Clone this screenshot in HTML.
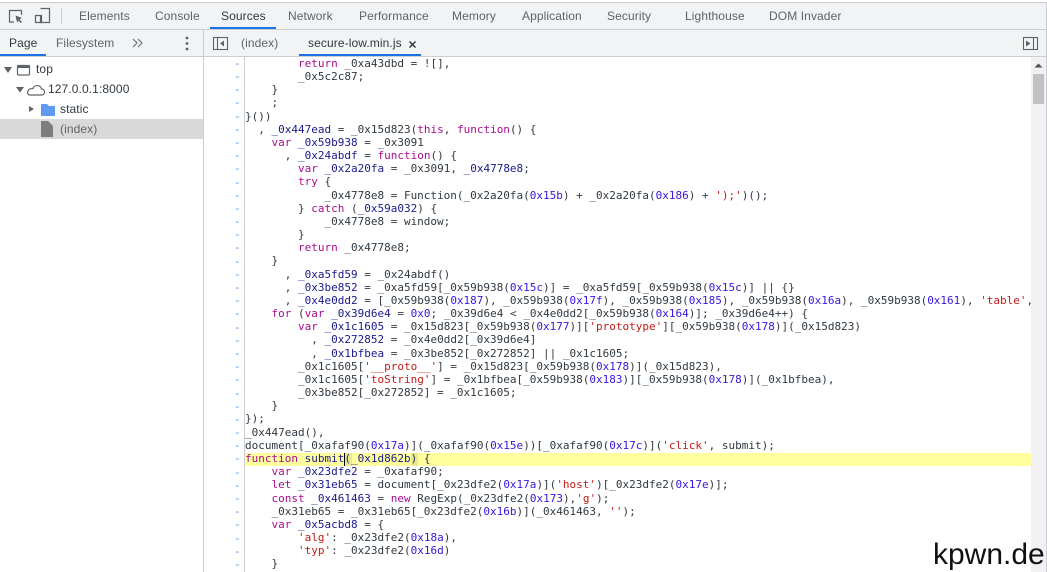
<!DOCTYPE html>
<html><head><meta charset="utf-8"><style>
html,body{margin:0;padding:0;background:#fff}
#r{position:relative;width:1047px;height:572px;overflow:hidden;background:#fff;font-family:"Liberation Sans",sans-serif;font-size:12px;letter-spacing:.1px;color:#5f6368}
.a{position:absolute;white-space:nowrap;line-height:16px}
.box{position:absolute}
#code{position:absolute;left:245px;top:56.85px;width:786px;height:516px;overflow:hidden;font:11px/13.18px "DejaVu Sans Mono",monospace;letter-spacing:0;color:#303942;white-space:pre}
#code div{height:13.18px}
#gut{position:absolute;left:234px;top:56.85px;width:10px;font:11px/13.18px "DejaVu Sans Mono",monospace;letter-spacing:0;color:#4a8fe8;white-space:pre}
#code a{color:#aa0d91}#code b{font-weight:400;color:#1a1a8c}#code i{font-style:normal;color:#3a14e0}#code u{text-decoration:none;color:#c41a16}
</style></head><body><div id="r">
<div class="box" style="left:0;top:2px;width:1047px;height:1px;background:#cbcdd1"></div>
<div class="box" style="left:0;top:3px;width:1047px;height:26px;background:#f1f3f4"></div>
<div class="box" style="left:0;top:29px;width:1047px;height:1px;background:#cbcdd1"></div>
<div class="box" style="left:0;top:30px;width:1047px;height:26px;background:#f1f3f4"></div>
<div class="box" style="left:0;top:56px;width:1047px;height:1px;background:#cbcdd1"></div>
<div class="box" style="left:203px;top:30px;width:1px;height:542px;background:#cbcdd1"></div>
<div class="box" style="left:1046px;top:3px;width:1px;height:569px;background:#cbcdd1"></div>
<svg class="box" style="left:0;top:0" width="70" height="30" fill="none" stroke="#5f6368" stroke-width="1.2">
<path d="M14 22H9.5V10.5H21.5V15"/><path d="M15.5 15.5L22 18L19.5 19.5L22 22L20.5 23L18.5 20.5L17 22.5Z" fill="#5f6368" stroke="none"/>
<path d="M40.5 8.5H49.5V22.5H40.5V16"/><path d="M35.5 15.5H41.5V22.5H35.5Z"/>
</svg>
<div class="box" style="left:61px;top:8px;width:1px;height:16px;background:#cbcdd1"></div>
<span class="a" style="left:79px;top:8px">Elements</span>
<span class="a" style="left:155px;top:8px">Console</span>
<span class="a" style="left:221px;top:8px;color:#303942">Sources</span>
<span class="a" style="left:288px;top:8px">Network</span>
<span class="a" style="left:359px;top:8px">Performance</span>
<span class="a" style="left:452px;top:8px">Memory</span>
<span class="a" style="left:522px;top:8px">Application</span>
<span class="a" style="left:607px;top:8px">Security</span>
<span class="a" style="left:685px;top:8px">Lighthouse</span>
<span class="a" style="left:769px;top:8px">DOM Invader</span>
<div class="box" style="left:210px;top:27px;width:66px;height:2px;background:#1a73e8"></div>
<span class="a" style="left:9px;top:35px;color:#303942">Page</span>
<span class="a" style="left:56px;top:35px">Filesystem</span>
<div class="box" style="left:0;top:54px;width:46px;height:2px;background:#1a73e8"></div>
<svg class="box" style="left:130px;top:34px" width="70" height="18" fill="none" stroke="#6e7276" stroke-width="1.2">
<path d="M3 5L7 9L3 13M8 5L12 9L8 13"/>
<circle cx="57" cy="4" r="1.4" fill="#5f6368" stroke="none"/><circle cx="57" cy="9.5" r="1.4" fill="#5f6368" stroke="none"/><circle cx="57" cy="15" r="1.4" fill="#5f6368" stroke="none"/>
</svg>
<svg class="box" style="left:212px;top:35px" width="18" height="18" fill="none" stroke="#5f6368" stroke-width="1.1">
<rect x="1.5" y="2.5" width="14" height="12"/><path d="M5.5 2.5V14.5"/><path d="M12 5.5V11.5L8 8.5Z" fill="#5f6368" stroke="none"/>
</svg>
<span class="a" style="left:241px;top:35px">(index)</span>
<span class="a" style="left:308px;top:35px;color:#303942">secure-low.min.js</span>
<svg class="box" style="left:408px;top:40px" width="10" height="10" stroke="#303942" stroke-width="1.5"><path d="M1.5 1.5L7.5 7.5M7.5 1.5L1.5 7.5"/></svg>
<div class="box" style="left:299px;top:54px;width:122px;height:2px;background:#1a73e8"></div>
<svg class="box" style="left:1022px;top:34px" width="18" height="18" fill="none" stroke="#5f6368" stroke-width="1.1">
<rect x="1.5" y="3.5" width="14" height="12"/><path d="M11.5 3.5V15.5"/><path d="M4 6.5V12.5L8.5 9.5Z" fill="#5f6368" stroke="none"/>
</svg>
<div class="box" style="left:0;top:119px;width:203px;height:20px;background:#d9d9d9"></div>
<svg class="box" style="left:0;top:57px" width="70" height="84" fill="none" stroke="#5f6368" stroke-width="1.2">
<path d="M4 10H12L8 16Z" fill="#5f6368" stroke="none"/>
<rect x="17.5" y="8.5" width="12" height="9.5" rx="1"/><path d="M17.5 10H29.5" stroke-width="2"/>
<path d="M16 30H24L20 35.5Z" fill="#5f6368" stroke="none"/>
<path d="M30 38H41.5C45.5 38 45.5 32 41.5 32C40.5 27.5 34 27.5 33 31.5C27 31 26 38 30 38Z"/>
<path d="M29 49L34 52L29 55Z" fill="#5f6368" stroke="none"/>
<path d="M41 47H47L49 49H55V59H41Z" fill="#5e9bf0" stroke="none"/>
<path d="M41 64H48L53 69V80H41Z" fill="#7d7d7d" stroke="none"/>
</svg>
<span class="a" style="left:36px;top:61px;color:#303942">top</span>
<span class="a" style="left:48px;top:81px;color:#303942">127.0.0.1:8000</span>
<span class="a" style="left:60px;top:101px;color:#303942">static</span>
<span class="a" style="left:60px;top:121px">(index)</span>
<div class="box" style="left:244px;top:57px;width:1px;height:515px;background:#cbcdd1"></div>
<div class="box" style="left:245px;top:453px;width:786px;height:13px;background:#ffff9e"></div>
<div class="box" style="left:345px;top:453px;width:7px;height:13px;background:#e8e89a"></div>
<div class="box" style="left:411px;top:453px;width:7px;height:13px;background:#e8e89a"></div>
<div class="box" style="left:344px;top:453px;width:1px;height:13px;background:#000;z-index:3"></div>
<div id="gut">-
-
-
-
-
-
-
-
-
-
-
-
-
-
-
-
-
-
-
-
-
-
-
-
-
-
-
-
-
-
-
-
-
-
-
-
-
-
-
</div>
<div id="code"><div>        <a>return</a> _0xa43dbd = ![],</div><div>        _0x5c2c87;</div><div>    }</div><div>    ;</div><div>}())</div><div>  , <b>_0x447ead</b> = _0x15d823(<a>this</a>, <a>function</a>() {</div><div>    <a>var</a> <b>_0x59b938</b> = _0x3091</div><div>      , <b>_0x24abdf</b> = <a>function</a>() {</div><div>        <a>var</a> <b>_0x2a20fa</b> = _0x3091, <b>_0x4778e8</b>;</div><div>        <a>try</a> {</div><div>            _0x4778e8 = Function(_0x2a20fa(<i>0x15b</i>) + _0x2a20fa(<i>0x186</i>) + <u>');'</u>)();</div><div>        } <a>catch</a> (<b>_0x59a032</b>) {</div><div>            _0x4778e8 = window;</div><div>        }</div><div>        <a>return</a> _0x4778e8;</div><div>    }</div><div>      , <b>_0xa5fd59</b> = _0x24abdf()</div><div>      , <b>_0x3be852</b> = _0xa5fd59[_0x59b938(<i>0x15c</i>)] = _0xa5fd59[_0x59b938(<i>0x15c</i>)] || {}</div><div>      , <b>_0x4e0dd2</b> = [_0x59b938(<i>0x187</i>), _0x59b938(<i>0x17f</i>), _0x59b938(<i>0x185</i>), _0x59b938(<i>0x16a</i>), _0x59b938(<i>0x161</i>), <u>'table'</u>, _0x59b938(<i>0x17b</i>)];</div><div>    <a>for</a> (<a>var</a> <b>_0x39d6e4</b> = <i>0x0</i>; _0x39d6e4 &lt; _0x4e0dd2[_0x59b938(<i>0x164</i>)]; _0x39d6e4++) {</div><div>        <a>var</a> <b>_0x1c1605</b> = _0x15d823[_0x59b938(<i>0x177</i>)][<u>'prototype'</u>][_0x59b938(<i>0x178</i>)](_0x15d823)</div><div>          , <b>_0x272852</b> = _0x4e0dd2[_0x39d6e4]</div><div>          , <b>_0x1bfbea</b> = _0x3be852[_0x272852] || _0x1c1605;</div><div>        _0x1c1605[<u>'__proto__'</u>] = _0x15d823[_0x59b938(<i>0x178</i>)](_0x15d823),</div><div>        _0x1c1605[<u>'toString'</u>] = _0x1bfbea[_0x59b938(<i>0x183</i>)][_0x59b938(<i>0x178</i>)](_0x1bfbea),</div><div>        _0x3be852[_0x272852] = _0x1c1605;</div><div>    }</div><div>});</div><div>_0x447ead(),</div><div>document[_0xafaf90(<i>0x17a</i>)](_0xafaf90(<i>0x15e</i>))[_0xafaf90(<i>0x17c</i>)](<u>'click'</u>, submit);</div><div><a>function</a> <b>submit</b>(<b>_0x1d862b</b>) {</div><div>    <a>var</a> <b>_0x23dfe2</b> = _0xafaf90;</div><div>    <a>let</a> <b>_0x31eb65</b> = document[_0x23dfe2(<i>0x17a</i>)](<u>'host'</u>)[_0x23dfe2(<i>0x17e</i>)];</div><div>    <a>const</a> <b>_0x461463</b> = <a>new</a> RegExp(_0x23dfe2(<i>0x173</i>),<u>'g'</u>);</div><div>    _0x31eb65 = _0x31eb65[_0x23dfe2(<i>0x16b</i>)](_0x461463, <u>''</u>);</div><div>    <a>var</a> <b>_0x5acbd8</b> = {</div><div>        <u>'alg'</u>: _0x23dfe2(<i>0x18a</i>),</div><div>        <u>'typ'</u>: _0x23dfe2(<i>0x16d</i>)</div><div>    }</div></div>
<div class="box" style="left:1031px;top:57px;width:15px;height:515px;background:#f1f1f1"></div>
<svg class="box" style="left:1033px;top:61px" width="11" height="8"><path d="M1.5 6.5H9.5L5.5 2.5Z" fill="#505050"/></svg>
<div class="box" style="left:1033px;top:74px;width:11px;height:30px;background:#c1c1c1"></div>
<span class="a" style="left:933px;top:537px;font-size:30px;line-height:36px;letter-spacing:0;color:#111">kpwn.de</span>
</div></body></html>
